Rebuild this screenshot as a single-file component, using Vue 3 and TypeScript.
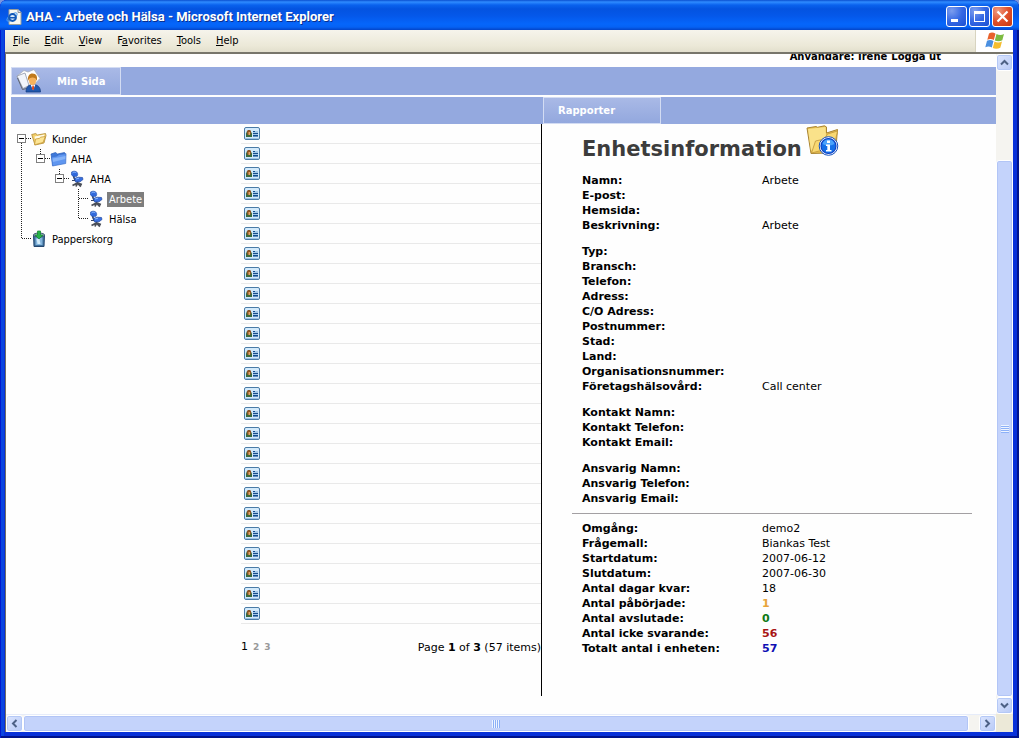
<script setup lang="ts">
type Cell = 'blank' | 'line' | 'tee' | 'elbow' | 'root' | 'node'
type Icon = 'folder-open' | 'folder-blue' | 'chair' | 'trash'

interface TreeRow {
  label: string
  icon: Icon
  cells: Cell[]
  selected?: boolean
}

interface Field {
  label: string
  value?: string
  tone?: string
}

const menus = [
  { before: '', key: 'F', after: 'ile' },
  { before: '', key: 'E', after: 'dit' },
  { before: '', key: 'V', after: 'iew' },
  { before: 'F', key: 'a', after: 'vorites' },
  { before: '', key: 'T', after: 'ools' },
  { before: '', key: 'H', after: 'elp' },
]

const tree: TreeRow[] = [
  { label: 'Kunder', icon: 'folder-open', cells: ['root'] },
  { label: 'AHA', icon: 'folder-blue', cells: ['line', 'node'] },
  { label: 'AHA', icon: 'chair', cells: ['line', 'blank', 'node'] },
  { label: 'Arbete', icon: 'chair', cells: ['line', 'blank', 'blank', 'tee'], selected: true },
  { label: 'Hälsa', icon: 'chair', cells: ['line', 'blank', 'blank', 'elbow'] },
  { label: 'Papperskorg', icon: 'trash', cells: ['elbow'] },
]

const cellPaths: Record<Cell, string> = {
  blank: '',
  line: 'M9.5 0V20',
  tee: 'M9.5 0V20M10 9.5H19',
  elbow: 'M9.5 0V10M10 9.5H19',
  root: 'M9.5 14V20M14 9.5H19',
  node: 'M9.5 0V5M14 9.5H19',
}

const pageSize = 25

const groups: Field[][] = [
  [
    { label: 'Namn:', value: 'Arbete' },
    { label: 'E-post:' },
    { label: 'Hemsida:' },
    { label: 'Beskrivning:', value: 'Arbete' },
  ],
  [
    { label: 'Typ:' },
    { label: 'Bransch:' },
    { label: 'Telefon:' },
    { label: 'Adress:' },
    { label: 'C/O Adress:' },
    { label: 'Postnummer:' },
    { label: 'Stad:' },
    { label: 'Land:' },
    { label: 'Organisationsnummer:' },
    { label: 'Företagshälsovård:', value: 'Call center' },
  ],
  [{ label: 'Kontakt Namn:' }, { label: 'Kontakt Telefon:' }, { label: 'Kontakt Email:' }],
  [{ label: 'Ansvarig Namn:' }, { label: 'Ansvarig Telefon:' }, { label: 'Ansvarig Email:' }],
]

const survey: Field[] = [
  { label: 'Omgång:', value: 'demo2' },
  { label: 'Frågemall:', value: 'Biankas Test' },
  { label: 'Startdatum:', value: '2007-06-12' },
  { label: 'Slutdatum:', value: '2007-06-30' },
  { label: 'Antal dagar kvar:', value: '18' },
  { label: 'Antal påbörjade:', value: '1', tone: 'orange' },
  { label: 'Antal avslutade:', value: '0', tone: 'green' },
  { label: 'Antal icke svarande:', value: '56', tone: 'red' },
  { label: 'Totalt antal i enheten:', value: '57', tone: 'blue' },
]
</script>

<template>
  <div class="window">
    <header class="titlebar">
      <svg class="app-icon" width="16" height="16" viewBox="0 0 16 16">
        <path d="M3 .5h9l3 3v12H3z" fill="#f7f7f2" stroke="#9a9f9c" />
        <path d="M12 .5v3h3" fill="#dfe6f5" stroke="#8a8f9c" />
        <ellipse cx="6" cy="8" rx="6" ry="2.4" transform="rotate(-38 6 8)" fill="none" stroke="#4b9df0" />
        <circle cx="6.500" cy="8.500" r="3.400" fill="#d8ebff" stroke="#1259b8" stroke-width="2" />
        <path d="M4 8.700h6" stroke="#1259b8" stroke-width="1.600" />
      </svg>
      <h1 class="title">AHA - Arbete och Hälsa - Microsoft Internet Explorer</h1>
      <div class="window-buttons">
        <button type="button" class="win-btn" aria-label="Minimize">
          <svg width="19" height="19" viewBox="0 0 19 19"><path d="M4 12h7v3H4z" fill="#fff" /></svg>
        </button>
        <button type="button" class="win-btn" aria-label="Maximize">
          <svg width="19" height="19" viewBox="0 0 19 19">
            <path d="M4 4h11v11H4zM5 7v7h9V7z" fill="#fff" fill-rule="evenodd" />
          </svg>
        </button>
        <button type="button" class="win-btn close" aria-label="Close">
          <svg width="19" height="19" viewBox="0 0 19 19">
            <path d="M4.500 4.500l10 10M14.500 4.500l-10 10" stroke="#fff" stroke-width="2.200" />
          </svg>
        </button>
      </div>
    </header>

    <div class="frame">
      <div class="menubar">
        <nav class="menus">
          <button v-for="m in menus" :key="m.key" type="button" class="menu">{{ m.before }}<u>{{ m.key }}</u>{{ m.after }}</button>
        </nav>
        <div class="flag">
          <svg width="20" height="18" viewBox="0 0 20 18">
            <path d="M4 1.500C6.500 0 8.500.5 10.500 1.700L8.800 8C7 7 5 6.500 2.300 7.700z" fill="#e8622c" />
            <path d="M11.500 2C14 3.200 16.500 3.300 19 2L17.300 8.300C15 9.500 12 9.500 9.800 8.400z" fill="#7dbb42" />
            <path d="M2 8.800C4.500 7.600 6.500 8 8.500 9.100L6.800 15.500C4.800 14.300 3 14 .300 15.200z" fill="#4a8fe0" />
            <path d="M9.500 9.600C12 10.700 14.500 10.800 17 9.500L15.300 15.800C13 17 10 17.200 7.800 16z" fill="#f5bd2e" />
          </svg>
        </div>
      </div>

      <div class="viewport">
        <main class="page">
          <div class="userline">
            <span>Anvandare: Irene</span>
            <a href="#logout">Logga ut</a>
          </div>

          <nav class="bar top-bar">
            <a href="#minsida" class="tab tab-home">
              <svg width="26" height="24" viewBox="0 0 26 24">
                <path d="M1 7L8 1.500l4 1.500 6-2.500 6 9-6 6-12 4z" fill="#fff" stroke="#a9b0bd" stroke-width=".8" />
                <path d="M1 7l6 12.500 6-3L9 4z" fill="#f1f5fc" stroke="#8f97a8" stroke-width=".8" />
                <path d="M1.500 9l5 11.500 4-1" fill="none" stroke="#5c6475" />
                <path d="M10 23c0-5 2.500-7.500 7-7.500s7.500 2.500 7.500 7.500z" fill="#2058ae" stroke="#123a80" stroke-width=".7" />
                <path d="M14.500 15.500h5L17 21z" fill="#fff" />
                <path d="M16.500 16.500h1.200l.6 3-1.200 2-1.200-2z" fill="#e34a1c" />
                <ellipse cx="16.500" cy="11.500" rx="3.500" ry="4.500" fill="#f6b25c" />
                <path d="M12 12c-.7-5 1.500-7.500 4.500-7.500 3.800 0 5.300 3 4.300 7.500-.8-2.500-2-3.500-4.300-3.500-2 0-3.700 1-4.500 3.500z" fill="#c07a1c" />
              </svg>
              <span>Min Sida</span>
            </a>
          </nav>

          <nav class="bar report-bar">
            <a href="#rapporter" class="tab tab-report">Rapporter</a>
          </nav>

          <div class="columns">
            <ul class="tree">
              <li v-for="(row, r) in tree" :key="r" class="tree-row">
                <svg v-for="(cell, c) in row.cells" :key="c" class="cell" width="19" height="20" viewBox="0 0 19 20">
                  <path :d="cellPaths[cell]" fill="none" stroke="#222" stroke-dasharray="1 1" />
                  <template v-if="cell === 'root' || cell === 'node'">
                    <rect x="5.500" y="5.500" width="8" height="8" fill="#fff" stroke="#808080" />
                    <path d="M7 9.500h5" stroke="#000" />
                  </template>
                </svg>
                <span class="tree-icon">
                  <svg v-if="row.icon === 'folder-open'" width="16" height="16" viewBox="0 0 16 16">
                    <path d="M.7 3.500l4-1L6.500 4l8-1.500.5 2-2 7.500-9 2z" fill="#f3cf6a" stroke="#b08a35" stroke-width=".8" />
                    <path d="M3.500 5.500l10-2-.6 3L4 8.500z" fill="#fffbe8" />
                    <path d="M3.500 13.800L4.500 8l4-.6 1-1.200 4.800-.7L12 11.500z" fill="#fde595" stroke="#c79a3a" stroke-width=".8" />
                  </svg>
                  <svg v-else-if="row.icon === 'folder-blue'" width="18" height="16" viewBox="0 0 18 16">
                    <path d="M1 3L5.500 1.500l2 1.500 7-1.500 1 2L3 14.500z" fill="#3d78da" stroke="#285cb4" stroke-width=".7" />
                    <path d="M2.500 15L1.500 6l5.500-1 2-1.500 7-.8-.3 9.800z" fill="#5f96f0" stroke="#3c70ca" stroke-width=".7" />
                    <path d="M2.500 7.500L15.500 5l-.2 3L3 11z" fill="#86b3f8" />
                  </svg>
                  <svg v-else-if="row.icon === 'chair'" width="17" height="18" viewBox="0 0 17 18">
                    <path d="M8.500 10v4M3.500 15.500L8.500 13l4.500 1.500M8.500 13L7 16.500M8.500 13l3.500 3.500" fill="none" stroke="#4b4f58" stroke-width="1.800" />
                    <path d="M4.500 5c0 3 1 4 2 5.500" fill="none" stroke="#34466c" stroke-width="1.600" />
                    <path d="M2.500 2c2-1.300 4.500-1 5.700.5C9 4 8.800 5.500 8 6.200 6 7 3.500 6.500 2.500 5z" fill="#2f68dc" stroke="#2450a8" stroke-width=".6" />
                    <path d="M5.500 8.500L9 7.200l4.500.3.5 2-3 2.300-4.500.2z" fill="#376fe0" stroke="#2148a0" stroke-width=".7" />
                    <path d="M3.500 3c1-1 2.500-1 3.800-.2M7 9l3-.8" fill="none" stroke="#8ab9ff" />
                    <path d="M3 10.500h3" stroke="#34466c" />
                  </svg>
                  <svg v-else width="16" height="18" viewBox="0 0 16 18">
                    <path d="M2.500 5l.5 11.500h10L13.500 5z" fill="#3f719c" stroke="#25476f" />
                    <path d="M4.500 7.500h7V15h-7z" fill="#83b4dc" />
                    <path d="M5.500 9l1 5h3l-1-5z" fill="#d3ecfa" />
                    <ellipse cx="8" cy="5" rx="5.500" ry="2" fill="#a8bccb" stroke="#3c5470" />
                    <path d="M6.500 1h3v4H12L8 9 4 5h2.500z" fill="#27b34a" stroke="#11852b" stroke-width=".7" />
                  </svg>
                </span>
                <a href="#tree" class="tree-label" :class="{ selected: row.selected }">{{ row.label }}</a>
              </li>
            </ul>

            <section class="list">
              <ul class="rows">
                <li v-for="n in pageSize" :key="n" class="row">
                  <a href="#person" class="card" aria-label="Person">
                    <svg width="16" height="13" viewBox="0 0 16 13">
                      <rect x=".5" y=".5" width="15" height="12" rx="1.500" fill="#d3eafb" stroke="#4a7ba6" />
                      <path d="M1 11.500h14" stroke="#9dc3e4" />
                      <path d="M2 10V6.500L3 4h3.500L8 6.500V10z" fill="#3a6b3c" />
                      <path d="M3 7V4l1-1h2l1 1v3L6 8H4z" fill="#8a5526" />
                      <path d="M4.500 5H6v3H4.500z" fill="#e2a565" />
                      <path d="M9 4.500h2M9 6.500h5M9 8.500h5" stroke="#164d8b" />
                      <path d="M11 4.500h3M9 5.500h5M9 7.500h5" stroke="#a4c8e8" />
                      <path d="M9 9.500h5" stroke="#5f8fc0" />
                    </svg>
                  </a>
                </li>
              </ul>
              <footer class="pager">
                <nav class="pages">
                  <span class="current">1</span>
                  <a href="#page2">2</a>
                  <a href="#page3">3</a>
                </nav>
                <p class="summary">Page <b>1</b> of <b>3</b> (57 items)</p>
              </footer>
            </section>

            <section class="detail">
              <header class="detail-head">
                <h2>Enhetsinformation</h2>
                <svg width="34" height="34" viewBox="0 0 34 34">
                  <path d="M1 4l9-1.500 1.500.8 7-1.500L20.500 3v6l11-3.500L30 23l-7 6-18 .5z" fill="#e8c050" stroke="#a98533" />
                  <path d="M2 5l17.500-2 .5 10L5 27z" fill="#fae28a" />
                  <path d="M5.500 29l4-12 9-2 3-5L31.500 7 28 23z" fill="#f8d872" stroke="#c0953a" stroke-width=".8" />
                  <circle cx="22.500" cy="22" r="9.300" fill="#fff" stroke="#1751bd" />
                  <circle cx="22.500" cy="22" r="7.500" fill="#1470e8" stroke="#0b3fc5" stroke-width="1.200" />
                  <path d="M16.500 20a6.300 6.300 0 0 1 12 0c-4 2-8 2-12 0z" fill="#4aa2fb" />
                  <path d="M21 16.500h3V19h-3zM20 20.500h4V26h1.500v1.500H20V26h1.300v-4H20z" fill="#fff" />
                </svg>
              </header>
              <dl v-for="(group, g) in groups" :key="g" class="fields">
                <template v-for="f in group" :key="f.label">
                  <dt>{{ f.label }}</dt>
                  <dd>{{ f.value }}</dd>
                </template>
              </dl>
              <hr class="rule" />
              <dl class="fields">
                <template v-for="f in survey" :key="f.label">
                  <dt>{{ f.label }}</dt>
                  <dd :class="f.tone">{{ f.value }}</dd>
                </template>
              </dl>
            </section>
          </div>
        </main>

        <div class="vscroll">
          <button type="button" class="scroll-btn" aria-label="Scroll up">
            <svg width="9" height="9" viewBox="0 0 9 9"><path d="M1 6.500l3.500-3.500L8 6.500" /></svg>
          </button>
          <div class="track"><div class="thumb"><i class="grip"></i></div></div>
          <button type="button" class="scroll-btn" aria-label="Scroll down">
            <svg width="9" height="9" viewBox="0 0 9 9"><path d="M1 2.500l3.500 3.500L8 2.500" /></svg>
          </button>
        </div>

        <div class="hscroll">
          <button type="button" class="scroll-btn" aria-label="Scroll left">
            <svg width="9" height="9" viewBox="0 0 9 9"><path d="M6.500 1L3 4.500 6.500 8" /></svg>
          </button>
          <div class="track"><div class="thumb"><i class="grip"></i></div></div>
          <button type="button" class="scroll-btn" aria-label="Scroll right">
            <svg width="9" height="9" viewBox="0 0 9 9"><path d="M2.500 1L6 4.500 2.500 8" /></svg>
          </button>
        </div>
        <div class="corner"></div>
      </div>
    </div>
  </div>
</template>

<style>
body {
  margin: 0;
  background: #7a96df;
}
</style>

<style scoped>
.window {
  box-sizing: border-box;
  min-height: 100vh;
  display: flex;
  flex-direction: column;
  padding: 0 6px 6px 5px;
  border-radius: 7px 7px 0 0;
  background: #0831d9;
  box-shadow: inset 1px 0 #0019cf, inset -2px -2px #00138c, inset 4px 0 #0a45e0;
  font: 11px/15px Verdana, "DejaVu Sans", sans-serif;
  color: #000;
  overflow: hidden;
}
button {
  margin: 0;
  padding: 0;
  border: 0;
  background: none;
  font: inherit;
  color: inherit;
}
a {
  color: inherit;
  text-decoration: none;
}
ul,
dl,
dd,
p,
h1,
h2 {
  margin: 0;
  padding: 0;
  list-style: none;
}
svg {
  display: block;
  flex: none;
}

/* Title bar */
.titlebar {
  display: flex;
  align-items: center;
  height: 30px;
  margin: 0 -6px 0 -5px;
  padding: 3px 6px 0 6px;
  box-sizing: border-box;
  background: linear-gradient(#0a4fd0 0, #2f8bff 2px, #0a62ee 5px, #0453e0 9px, #0558ea 16px, #0566fb 24px, #0562f4 27px, #0344c8 30px);
}
.title {
  flex: 1;
  margin-left: 4px;
  font: bold 13px/18px "Trebuchet MS", Roboto, "Noto Sans", sans-serif;
  color: #fff;
  text-shadow: 1px 1px #0a2f8c;
  white-space: nowrap;
}
.window-buttons {
  display: flex;
  gap: 2px;
}
.win-btn {
  width: 21px;
  height: 21px;
  border: 1px solid #fff;
  border-radius: 3px;
  background: radial-gradient(circle at 25% 20%, #7c9dee, #3568e4 50%, #1c4fd2);
}
.win-btn.close {
  background: radial-gradient(circle at 25% 20%, #f09a80, #e0502c 50%, #c6380f);
}

/* Menu bar */
.frame {
  flex: 1;
  display: flex;
  flex-direction: column;
}
.menubar {
  display: flex;
  height: 22px;
  background: linear-gradient(#f6f4ec, #ece9d8 70%, #e2dfcd);
  border-bottom: 2px solid #77756a;
}
.menus {
  flex: 1;
  display: flex;
  border-right: 1px solid #d8d4c0;
}
.menu {
  padding: 0 7px 0 8px;
  font: 11px/22px Tahoma, "DejaVu Sans Condensed", "DejaVu Sans", sans-serif;
}
.flag {
  display: flex;
  align-items: center;
  justify-content: center;
  width: 37px;
  background: #fff;
}

/* Browser viewport */
.viewport {
  flex: 1;
  display: grid;
  grid-template-columns: minmax(0, 1fr) 17px;
  grid-template-rows: 1fr 18px;
  border-left: 1px solid #716f64;
  background: #fff;
}
.page {
  display: flex;
  flex-direction: column;
  padding-left: 5px;
  background: #fefefe;
}
.userline {
  display: flex;
  align-items: flex-end;
  justify-content: flex-end;
  gap: 4px;
  height: 10px;
  margin-bottom: 3px;
  padding-right: 55px;
  overflow: hidden;
  font-size: 10px;
  font-weight: bold;
}
.bar {
  display: flex;
  height: 28px;
  background: #94a9df;
}
.top-bar {
  margin-bottom: 2px;
}
.report-bar {
  height: 27px;
  padding-left: 532px;
}
.tab {
  box-sizing: border-box;
  display: flex;
  align-items: center;
  border: 1px solid #d3dcf3;
  background: linear-gradient(#a9b9e6, #93a8de);
  font-weight: bold;
  color: #fff;
}
.tab-home {
  width: 110px;
  gap: 15px;
  padding-left: 4px;
  font-size: 10px;
}
.tab-report {
  width: 118px;
  padding-left: 14px;
  font-size: 10px;
}
.columns {
  flex: 1;
  display: grid;
  grid-template-columns: 230px 300px minmax(0, 1fr);
  margin-bottom: 18px;
}

/* Tree */
.tree {
  padding: 5px 0 0 1px;
  font-family: Tahoma, "DejaVu Sans Condensed", "DejaVu Sans", sans-serif;
}
.tree-row {
  display: flex;
  align-items: center;
  height: 20px;
}
.tree-icon {
  width: 19px;
}
.tree-label {
  padding: 0 2px;
}
.tree-label.selected {
  background: #7d7d7d;
  color: #fff;
}

/* List */
.row {
  height: 19px;
  padding-left: 3px;
  border-bottom: 1px solid #e9e9e9;
}
.card {
  display: block;
  width: 16px;
  padding-top: 3px;
}
.pager {
  display: flex;
  justify-content: space-between;
  align-items: center;
  height: 46px;
}
.pages {
  display: flex;
  align-items: baseline;
  gap: 5px;
}
.pages a {
  font-size: 9px;
  font-weight: bold;
  color: #999;
}

/* Details */
.detail {
  padding-left: 30px;
  border-left: 1px solid #000;
}
.detail-head {
  display: flex;
  align-items: center;
  gap: 4px;
  height: 49px;
  padding-left: 10px;
}
.detail-head svg {
  align-self: flex-start;
}
.detail-head h2 {
  font: bold 21px/28px Verdana, "DejaVu Sans", sans-serif;
  color: #3c3c3c;
}
.fields {
  display: grid;
  grid-template-columns: 180px minmax(0, 1fr);
  grid-auto-rows: 15px;
  padding-left: 10px;
}
.fields + .fields {
  margin-top: 11px;
}
dt,
.orange,
.green,
.red,
.blue {
  font-weight: bold;
}
.orange { color: #e8a43a; }
.green { color: #0f7a16; }
.red { color: #a81414; }
.blue { color: #0f0fb4; }
.rule {
  width: 400px;
  max-width: 100%;
  height: 1px;
  margin: 7px 0;
  border: 0;
  background: #a3a0a3;
}

/* Scroll bars */
.vscroll,
.hscroll {
  display: flex;
  background: #f5f4f0;
}
.vscroll {
  flex-direction: column;
}
.hscroll {
  border-top: 1px solid #e6ecfa;
}
.track {
  flex: 1;
  display: flex;
}
.vscroll .track {
  flex-direction: column;
  padding-top: 89px;
}
.hscroll .track {
  padding-right: 10px;
}
.scroll-btn {
  display: flex;
  align-items: center;
  justify-content: center;
  width: 17px;
  height: 17px;
  border: 1px solid #fff;
  border-radius: 3px;
  background: linear-gradient(135deg, #dbe5ff, #b8caf6);
  box-shadow: inset 0 0 0 1px #b4c8f6;
  flex: none;
}
.scroll-btn path {
  fill: none;
  stroke: #4d6185;
  stroke-width: 2;
}
.thumb {
  flex: 1;
  display: flex;
  align-items: center;
  justify-content: center;
  border: 1px solid #fff;
  border-radius: 3px;
  background: #c4d3fb;
  box-shadow: inset 0 0 0 1px #b2c5f6;
}
.grip {
  width: 8px;
  height: 8px;
  background: repeating-linear-gradient(90deg, #eef4ff 0 1px, #8cb0f8 1px 2px);
}
.vscroll .grip {
  background: repeating-linear-gradient(#eef4ff 0 1px, #8cb0f8 1px 2px);
}
.corner {
  background: #ece9d8;
}
</style>
